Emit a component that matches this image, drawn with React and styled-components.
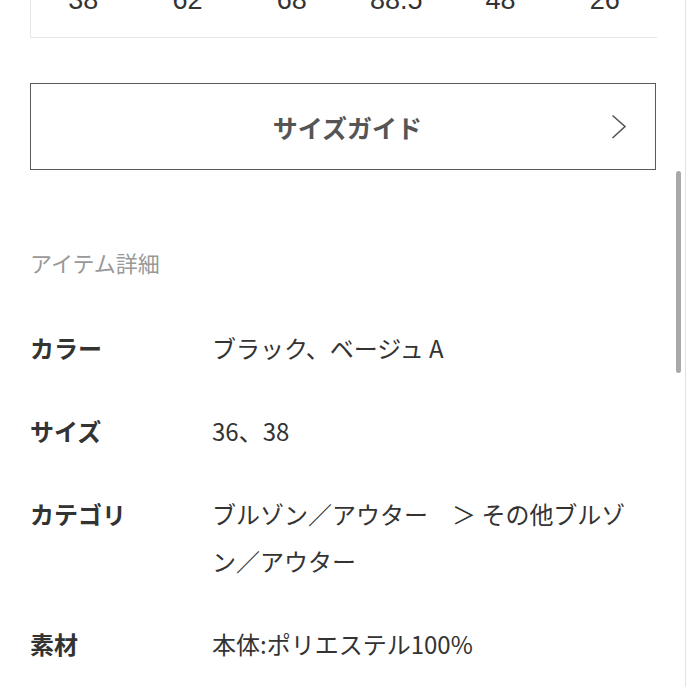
import styled, { createGlobalStyle } from "styled-components";

const GlobalStyle = createGlobalStyle`
  html, body {
    margin: 0;
    padding: 0;
    background: #fff;
    overflow: hidden;
  }
  body {
    font-family: "Noto Sans CJK JP", "Noto Sans", sans-serif;
    color: #333;
  }
`;

const sizes = ["38", "62", "68", "88.5", "48", "26"];

const details = [
  { label: "カラー", value: "ブラック、ベージュ A" },
  { label: "サイズ", value: "36、38" },
  { label: "カテゴリ", value: "ブルゾン／アウター　＞ その他ブルゾン／アウター" },
  { label: "素材", value: "本体:ポリエステル100%" },
];

const App = () => {
  return (
    <>
      <GlobalStyle />
      <Page>
        <SizeTable>
          <SizeRow>
            {sizes.map((s, i) => (
              <SizeCell key={i}>{s}</SizeCell>
            ))}
          </SizeRow>
        </SizeTable>

        <GuideButton>
          <span />
          <GuideLabel>サイズガイド</GuideLabel>
          <Chevron width="16" height="26" viewBox="0 0 16 26">
            <path d="M1.5 1.5 L14 12.5 L1.5 24" fill="none" stroke="#555" strokeWidth="1.6" />
          </Chevron>
        </GuideButton>

        <SectionTitle>アイテム詳細</SectionTitle>

        <DetailList>
          {details.map((d) => (
            <DetailRow key={d.label}>
              <Label>{d.label}</Label>
              <Value>{d.value}</Value>
            </DetailRow>
          ))}
        </DetailList>

        <ScrollThumb />
      </Page>
    </>
  );
};

const Page = styled.div`
  position: relative;
  box-sizing: border-box;
  width: 686px;
  height: 687px;
  padding: 0 29px 0 30px;
  border-right: 1px solid #e2e2e2;
  overflow: hidden;
`;

const SizeTable = styled.div`
  margin-top: -16px;
  padding-bottom: 21px;
  border-left: 1px solid #e6e6e6;
  border-bottom: 1px solid #e6e6e6;
  margin-right: -1px;
`;

const SizeRow = styled.div`
  display: grid;
  grid-template-columns: repeat(6, 1fr);
`;

const SizeCell = styled.div`
  font-family: "Liberation Sans", Arial, sans-serif;
  font-size: 27px;
  line-height: 32px;
  text-align: center;
  color: #333;
`;

const GuideButton = styled.div`
  display: grid;
  grid-template-columns: 1fr auto 1fr;
  align-items: center;
  height: 87px;
  box-sizing: border-box;
  margin-top: 45px;
  padding: 0 28px 0 37px;
  border: 1px solid #5a5a5a;
  background: #fff;
`;

const GuideLabel = styled.span`
  font-size: 25px;
  font-weight: 700;
  color: #555;
`;

const Chevron = styled.svg`
  justify-self: end;
  display: block;
`;

const SectionTitle = styled.h2`
  margin: 77px 0 0;
  font-size: 22px;
  line-height: 30px;
  font-weight: 400;
  color: #999;
`;

const DetailList = styled.div`
  display: flex;
  flex-direction: column;
  gap: 36px;
  margin-top: 47px;
`;

const DetailRow = styled.div`
  display: grid;
  grid-template-columns: 182px 1fr;
  font-size: 24px;
  line-height: 47px;
`;

const Label = styled.div`
  font-weight: 700;
  color: #333;
`;

const Value = styled.div`
  padding-right: 20px;
  color: #333;
`;

const ScrollThumb = styled.div`
  position: absolute;
  left: 676px;
  top: 171px;
  width: 5px;
  height: 202px;
  border-radius: 3px;
  background: #a9a9a9;
`;

export default App;
